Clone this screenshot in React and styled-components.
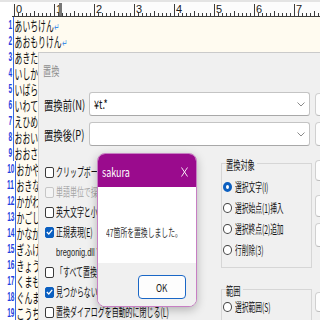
import React from "react";
import styled, { createGlobalStyle, css } from "styled-components";

const GlobalStyle = createGlobalStyle`
  html, body {
    margin: 0;
    padding: 0;
    width: 320px;
    height: 320px;
    overflow: hidden;
    background: #fff;
  }
  body {
    font-family: "Noto Sans CJK JP", "Noto Sans", sans-serif;
    line-height: 14px;
    color: #111;
  }
`;

// the shot is squeezed sideways, so text is narrowed to match
const narrow = (sx, origin = "left") => css`
  display: inline-block;
  white-space: nowrap;
  transform: scaleX(${sx});
  transform-origin: ${origin} center;
`;

const Screen = styled.div`
  position: relative;
  width: 320px;
  height: 320px;
  overflow: hidden;
  background: #fffbf0;
`;

const Editor = styled.div`
  display: flex;
  flex-direction: column;
`;

const RulerBar = styled.svg`
  display: block;
  flex: none;
  background: #fcfcfc;
`;

const Line = styled.div`
  display: flex;
  height: 16px;
`;

const LineNo = styled.div`
  flex: 0 0 12px;
  background: #fff;
  border-right: 1px solid #3d68e0;
  display: flex;
  justify-content: flex-end;
  align-items: center;
  padding-right: 1px;
`;

const NumText = styled.span`
  font-family: "Liberation Sans", sans-serif;
  font-size: 13px;
  font-weight: bold;
  line-height: 16px;
  color: #1f3fe0;
  ${narrow(0.5, "right")}
`;

const LineText = styled.span`
  font-size: 14px;
  line-height: 16px;
  color: #111;
  padding-left: 1px;
  ${narrow(0.56)}
`;

const ReturnMark = styled.span`
  font-family: "DejaVu Sans", sans-serif;
  font-size: 11px;
  color: #3d8ee8;
  margin-left: 1px;
`;

const ReplaceWindow = styled.div`
  position: absolute;
  left: 38px;
  top: 52px;
  width: 300px;
  height: 280px;
  box-sizing: border-box;
  background: #f0f0f0;
  border-left: 1px solid #d2d2d2;
  border-top: 1px solid #cacaca;
  display: flex;
  flex-direction: column;
`;

const Caption = styled.div`
  height: 35px;
  flex: none;
  display: flex;
  align-items: center;
  padding-left: 4px;
`;

const CaptionText = styled.span`
  font-size: 12px;
  line-height: 14px;
  color: #8e8e8e;
  ${narrow(0.68)}
`;

const WindowBody = styled.div`
  display: flex;
`;

const Main = styled.div`
  flex: 0 0 273px;
  display: flex;
  flex-direction: column;
`;

const FieldRow = styled.div`
  display: flex;
  align-items: center;
  height: ${p => p.$h}px;
  margin-top: ${p => p.$mt}px;
  padding: 0 2px 0 5px;
`;

const FieldLabel = styled.div`
  flex: none;
  width: 45px;
  min-width: 0;
  overflow: visible;
`;

const FieldLabelText = styled.span`
  font-size: 13px;
  line-height: 16px;
  ${narrow(0.72)}
`;

const Combo = styled.div`
  flex: 1;
  min-width: 0;
  height: 100%;
  box-sizing: border-box;
  background: #fff;
  border: 1px solid #c4c4c4;
  border-bottom-color: #a8a8a8;
  border-radius: 3px;
  display: flex;
  align-items: center;
  justify-content: space-between;
  padding: 0 4px;
`;

const ComboValue = styled.span`
  font-size: 12px;
  line-height: 14px;
  ${narrow(0.75)}
`;

const Lower = styled.div`
  display: flex;
  margin-top: 10px;
`;

const CheckCol = styled.div`
  flex: none;
  width: 182px;
  min-width: 0;
  overflow: hidden;
  padding: 6px 0 0 6px;
  box-sizing: border-box;
  display: flex;
  flex-direction: column;
`;

const CheckRow = styled.div`
  display: flex;
  align-items: center;
  height: 20px;
  gap: 2px;
  padding-left: ${p => p.$indent || 0}px;
`;

const Box = styled.span`
  flex: none;
  width: 9px;
  height: 11px;
  box-sizing: border-box;
  border-radius: 2px;
  border: 1px solid ${p => (p.$checked ? "#0b5fc0" : p.$disabled ? "#c6c6c6" : "#3a3a3a")};
  background: ${p => (p.$checked ? "#0b5fc0" : p.$disabled ? "#f4f4f4" : "#fff")};
  display: flex;
  align-items: center;
  justify-content: center;
`;

const CheckText = styled.span`
  font-size: 12px;
  line-height: 14px;
  color: ${p => (p.$disabled ? "#a6a6a6" : "#111")};
  ${narrow(0.58)}
`;

const DllText = styled.span`
  font-family: "Liberation Sans", sans-serif;
  font-size: 11px;
  line-height: 14px;
  color: #222;
  ${narrow(0.68)}
`;

const GroupCol = styled.div`
  flex: none;
  width: 91px;
  display: flex;
  flex-direction: column;
`;

const Group = styled.fieldset`
  margin: ${p => p.$mt || 0}px 0 0 0;
  padding: ${p => p.$pt}px 0 ${p => p.$pb}px 1px;
  border: 1px solid #d6d6d6;
  min-width: 0;
  box-sizing: border-box;
  width: 91px;
`;

const Legend = styled.legend`
  padding: 0;
  margin-left: 3px;
  width: ${p => p.$w}px;
  height: 14px;
  overflow: visible;
`;

const LegendText = styled.span`
  font-size: 12px;
  line-height: 14px;
  ${narrow(0.6)}
`;

const RadioRow = styled.div`
  display: flex;
  align-items: center;
  height: 21px;
  gap: 3px;
`;

const Radio = styled.span`
  flex: none;
  width: 9px;
  height: 10px;
  box-sizing: border-box;
  border-radius: 50%;
  background: #fff;
  border: ${p => (p.$checked ? "3px solid #0b5fc0" : "1px solid #444")};
`;

const RadioText = styled.span`
  font-size: 12px;
  line-height: 14px;
  ${narrow(0.56)}
`;

const ButtonCol = styled.div`
  flex: none;
  margin-left: 3px;
  display: flex;
  flex-direction: column;
`;

const SideButton = styled.div`
  width: 60px;
  height: ${p => p.$h}px;
  margin-top: ${p => p.$mt}px;
  box-sizing: border-box;
  background: #fdfdfd;
  border: 1px solid #d0d0d0;
  border-bottom-color: #bcbcbc;
  border-radius: 4px;
`;

const MsgBox = styled.div`
  position: absolute;
  left: 97px;
  top: 153px;
  width: 100px;
  height: 154px;
  box-sizing: border-box;
  border: 1px solid #c77fc3;
  border-radius: 8px;
  overflow: hidden;
  background: #fff;
  box-shadow: 0 3px 10px rgba(0, 0, 0, 0.25);
`;

const MsgTitle = styled.div`
  height: 33px;
  box-sizing: border-box;
  background: #9a0b8d;
  display: flex;
  align-items: center;
  justify-content: space-between;
  padding: 3px 8px 0 4px;
`;

const MsgTitleText = styled.span`
  font-size: 12px;
  line-height: 14px;
  color: #fff;
  ${narrow(0.75)}
`;

const MsgBody = styled.div`
  height: 76px;
  box-sizing: border-box;
  padding: 36px 0 0 8px;
  overflow: hidden;
`;

const MsgText = styled.span`
  font-size: 11px;
  line-height: 14px;
  color: #333;
  ${narrow(0.62)}
`;

const MsgFooter = styled.div`
  height: 43px;
  box-sizing: border-box;
  background: #f0f0f0;
  padding: 12px 0 0 40px;
`;

const OkButton = styled.div`
  width: 48px;
  height: 24px;
  box-sizing: border-box;
  border: 1px solid #1a67c6;
  border-radius: 4px;
  background: #fdfdfd;
  display: flex;
  align-items: center;
  justify-content: center;
`;

const OkText = styled.span`
  font-size: 11px;
  line-height: 14px;
  color: #222;
  ${narrow(0.75, "center")}
`;

const prefectures = [
  "あいちけん", "あおもりけん", "あきたけん", "いしかわけん", "いばらきけん",
  "いわてけん", "えひめけん", "おおいたけん", "おおさかふ", "おかやまけん",
  "おきなわけん", "かがわけん", "かごしまけん", "かながわけん", "ぎふけん",
  "きょうとふ", "くまもとけん", "ぐんまけん", "こうちけん",
];

const checks = [
  { text: "クリップボードから貼り付ける(T)" },
  { text: "単語単位で探す(W)", disabled: true },
  { text: "英大文字と小文字を区別する(C)" },
  { text: "正規表現(E)", checked: true },
  { dll: "bregonig.dll Ver.4.20" },
  { text: "「すべて置換」は置換の繰返し(R)" },
  { text: "見つからないときにメッセージを表示(M)", checked: true },
  { text: "置換ダイアログを自動的に閉じる(L)" },
];

const targets = ["選択文字(I)", "選択始点(1)挿入", "選択終点(2)追加", "行削除(3)"];

const sideButtons = [
  { mt: 5, h: 23 },
  { mt: 6, h: 24 },
  { mt: 14, h: 21 },
  { mt: 14, h: 22 },
  { mt: 6, h: 24 },
  { mt: 45, h: 20 },
];

function Ruler() {
  const marks = [];
  for (let c = 0; c <= 76; c++) {
    const x = 14.5 + c * 4;
    const h = c % 10 === 0 ? 12 : c % 5 === 0 ? 5 : 3;
    marks.push(<line key={c} x1={x} x2={x} y1={16 - h} y2={16} stroke="#3c3c3c" />);
    if (c % 10 === 0) {
      marks.push(
        <text key={"n" + c} x={x + 1.5} y={13} fontSize="11" fill="#1c1c1c"
          fontFamily="Liberation Sans, sans-serif">{c / 10}</text>
      );
    }
  }
  return (
    <RulerBar width="320" height="17" viewBox="0 0 320 17">
      <rect x="0" y="0" width="320" height="2" fill="#e4e4e4" />
      <rect x="0" y="2" width="12" height="15" fill="#fff" />
      {marks}
      <rect x="59" y="3" width="3" height="13" fill="#767676" />
      <line x1="12" x2="320" y1="16.5" y2="16.5" stroke="#3c3c3c" />
    </RulerBar>
  );
}

const Chevron = () => (
  <svg width="8" height="5" viewBox="0 0 8 5">
    <path d="M0.5 0.5 L4 4 L7.5 0.5" fill="none" stroke="#8a8a8a" strokeWidth="1" />
  </svg>
);

const Tick = () => (
  <svg width="7" height="6" viewBox="0 0 7 6">
    <path d="M0.8 3 L2.8 5 L6.2 0.8" fill="none" stroke="#fff" strokeWidth="1.2" />
  </svg>
);

const CloseGlyph = () => (
  <svg width="7" height="10" viewBox="0 0 7 10">
    <path d="M0.5 0.5 L6.5 9.5 M6.5 0.5 L0.5 9.5" stroke="#fff" strokeWidth="0.9" fill="none" />
  </svg>
);

export default function App() {
  return (
    <>
      <GlobalStyle />
      <Screen>
        <Editor>
          <Ruler />
          {prefectures.map((p, i) => (
            <Line key={p}>
              <LineNo>
                <NumText>{i + 1}</NumText>
              </LineNo>
              <LineText>
                {p}
                <ReturnMark>↵</ReturnMark>
              </LineText>
            </Line>
          ))}
        </Editor>

        <ReplaceWindow>
          <Caption>
            <CaptionText>置換</CaptionText>
          </Caption>
          <WindowBody>
            <Main>
              <FieldRow $h={24} $mt={4}>
                <FieldLabel><FieldLabelText>置換前(N)</FieldLabelText></FieldLabel>
                <Combo>
                  <ComboValue>¥t.*</ComboValue>
                  <Chevron />
                </Combo>
              </FieldRow>
              <FieldRow $h={24} $mt={6}>
                <FieldLabel><FieldLabelText>置換後(P)</FieldLabelText></FieldLabel>
                <Combo>
                  <span />
                  <Chevron />
                </Combo>
              </FieldRow>
              <Lower>
                <CheckCol>
                  {checks.map((c, i) =>
                    c.dll ? (
                      <CheckRow key={i} $indent={11}>
                        <DllText>{c.dll}</DllText>
                      </CheckRow>
                    ) : (
                      <CheckRow key={i}>
                        <Box $checked={c.checked} $disabled={c.disabled}>
                          {c.checked && <Tick />}
                        </Box>
                        <CheckText $disabled={c.disabled}>{c.text}</CheckText>
                      </CheckRow>
                    )
                  )}
                </CheckCol>
                <GroupCol>
                  <Group $pt={6} $pb={7}>
                    <Legend $w={31}><LegendText>置換対象</LegendText></Legend>
                    {targets.map((t, i) => (
                      <RadioRow key={t}>
                        <Radio $checked={i === 0} />
                        <RadioText>{t}</RadioText>
                      </RadioRow>
                    ))}
                  </Group>
                  <Group $mt={14} $pt={0} $pb={20}>
                    <Legend $w={17}><LegendText>範囲</LegendText></Legend>
                    <RadioRow>
                      <Radio />
                      <RadioText>選択範囲(S)</RadioText>
                    </RadioRow>
                  </Group>
                </GroupCol>
              </Lower>
            </Main>
            <ButtonCol>
              {sideButtons.map((b, i) => (
                <SideButton key={i} $mt={b.mt} $h={b.h} />
              ))}
            </ButtonCol>
          </WindowBody>
        </ReplaceWindow>

        <MsgBox>
          <MsgTitle>
            <MsgTitleText>sakura</MsgTitleText>
            <CloseGlyph />
          </MsgTitle>
          <MsgBody>
            <MsgText>47箇所を置換しました。</MsgText>
          </MsgBody>
          <MsgFooter>
            <OkButton>
              <OkText>OK</OkText>
            </OkButton>
          </MsgFooter>
        </MsgBox>
      </Screen>
    </>
  );
}
